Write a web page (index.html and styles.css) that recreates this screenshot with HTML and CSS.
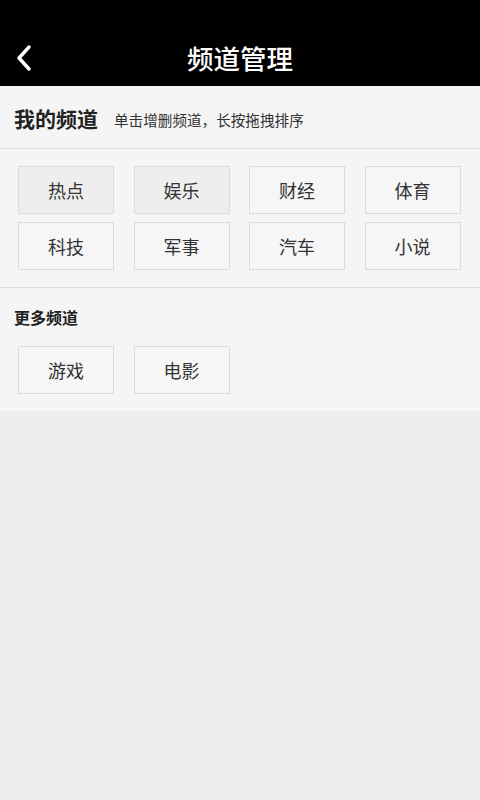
FILE: index.html
```html
<!DOCTYPE html>
<html lang="zh-CN">
<head>
<meta charset="utf-8">
<title>频道管理</title>
<link rel="stylesheet" href="styles.css">
</head>
<body>
<header class="topbar">
  <div class="bar">
    <svg class="back" width="20" height="26" viewBox="0 0 20 26"><path d="M15 2 L5 13 L15 24" fill="none" stroke="#fff" stroke-width="3.4" stroke-linecap="round" stroke-linejoin="round"/></svg>
    <h1 class="title">频道管理</h1>
  </div>
</header>
<main class="panel">
  <div class="mine-head">
    <span class="mine-title">我的频道</span>
    <span class="hint">单击增删频道，长按拖拽排序</span>
  </div>
  <div class="grid mine-grid">
    <div class="chip active">热点</div>
    <div class="chip active">娱乐</div>
    <div class="chip">财经</div>
    <div class="chip">体育</div>
    <div class="chip">科技</div>
    <div class="chip">军事</div>
    <div class="chip">汽车</div>
    <div class="chip">小说</div>
  </div>
  <div class="more">
    <div class="more-title">更多频道</div>
    <div class="grid">
      <div class="chip">游戏</div>
      <div class="chip">电影</div>
    </div>
  </div>
</main>
</body>
</html>
```
FILE: styles.css
```css
html, body {
  margin: 0;
  padding: 0;
}
body {
  width: 480px;
  height: 800px;
  background: #eeeeee;
  font-family: "Noto Sans CJK SC", "Noto Sans", sans-serif;
  color: #333;
}
.topbar {
  background: #000;
  height: 86px;
  padding-top: 30px;
  box-sizing: border-box;
}
.bar {
  position: relative;
  height: 56px;
  display: flex;
  align-items: center;
  justify-content: center;
}
.back {
  position: absolute;
  left: 14px;
  top: 15px;
}
.title {
  margin: 0;
  color: #fff;
  font-size: 26.5px;
  font-weight: 500;
  line-height: 54px;
}
.panel {
  background: #f5f5f5;
}
.mine-head {
  height: 63px;
  display: flex;
  align-items: center;
  padding-left: 14px;
  border-bottom: 1px solid #dddddd;
  box-sizing: border-box;
  padding-top: 2px;
}
.mine-title {
  font-size: 21px;
  font-weight: 700;
  color: #222;
}
.hint {
  font-size: 14.6px;
  color: #333;
  margin-left: 16px;
  padding-top: 2px;
}
.grid {
  display: grid;
  grid-template-columns: repeat(4, 96px);
  column-gap: 19.5px;
  row-gap: 8px;
  padding-left: 18px;
}
.mine-grid {
  padding-top: 17px;
  padding-bottom: 17px;
  border-bottom: 1px solid #dddddd;
}
.chip {
  height: 48px;
  box-sizing: border-box;
  border: 1px solid #dcdcdc;
  display: flex;
  align-items: center;
  justify-content: center;
  font-size: 18px;
  color: #333;
  background: #f6f6f6;
}
.chip.active {
  background: #eeeeee;
}
.more {
  padding-top: 18px;
  padding-bottom: 17px;
}
.more-title {
  font-size: 16px;
  font-weight: 700;
  color: #222;
  line-height: 22px;
  padding-left: 14px;
  margin-bottom: 18px;
}
```
